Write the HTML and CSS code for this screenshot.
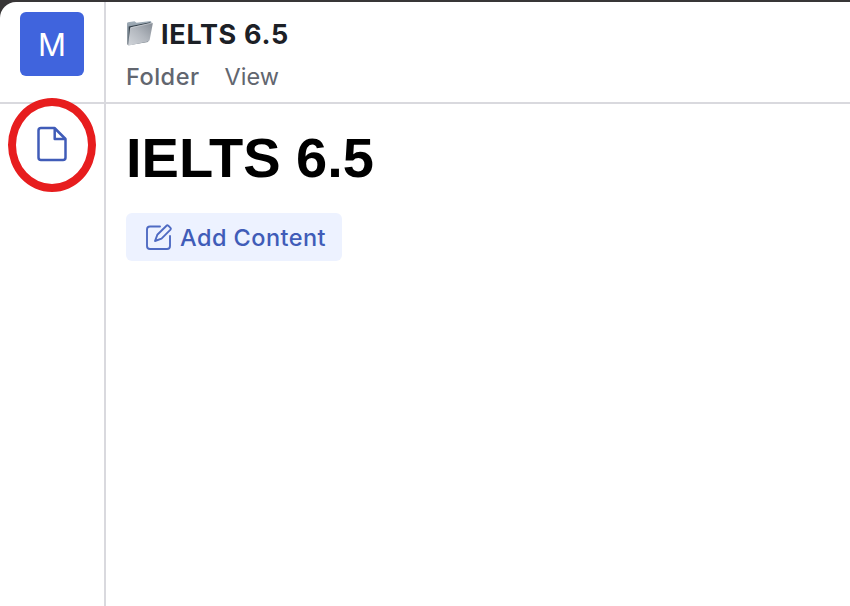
FILE: index.html
```
<!DOCTYPE html>
<html lang="en">
<head>
<meta charset="utf-8">
<title>IELTS 6.5</title>
<link rel="stylesheet" href="styles.css">
</head>
<body>
<div class="window">
  <aside class="sidebar">
    <div class="workspace"><div class="avatar">M</div></div>
    <button class="page-button" aria-label="Page">
      <svg width="32" height="36" viewBox="0 0 32 36" fill="none" stroke="#405cb8" stroke-width="2.5" stroke-linejoin="round"><path d="M5 2h13.500L29.500 13V31.500a2.500 2.500 0 0 1-2.500 2.500H5A2.500 2.500 0 0 1 2.500 31.500V4.500A2.500 2.500 0 0 1 5 2Z"/><path d="M18.700 2V13H29.500"/></svg>
      <span class="ring"></span>
    </button>
  </aside>
  <main class="main">
    <header class="header">
      <div class="title-row">
        <svg class="folder" width="28" height="28" viewBox="0 0 28 28">
          <defs>
            <linearGradient id="front" x1="0" y1="1" x2="1" y2="0"><stop offset="0" stop-color="#d2d6db"/><stop offset=".5" stop-color="#b2b7be"/><stop offset="1" stop-color="#858c95"/></linearGradient>
            <linearGradient id="back" x1="0" y1="0" x2="0" y2="1"><stop offset="0" stop-color="#a3b0bb"/><stop offset="1" stop-color="#596570"/></linearGradient>
          </defs>
          <path fill="url(#back)" d="M1 4.500Q1 3.500 2 3.300L8.500 2.300 10.500 3.800 24.500 2Q25.500 2 25.300 4L22 23 2.500 26.300Q1.300 26 1.300 25Z"/>
          <path fill="#34404a" d="M2.700 7.500 24.300 3.200V6L3 23Z"/>
          <path fill="url(#front)" d="M5 8.200 25.500 3.700Q27 3.500 26.700 5L23.700 20.700Q23.500 22.100 22.200 22.400L3.200 26.600Q2 26.800 2.200 25.500L4 9.500Q4.100 8.500 5 8.200Z"/>
          <path fill="none" stroke="#d8dce0" stroke-width=".6" d="M4.500 8.800 26 4"/>
        </svg>
        <span class="title">IELTS 6.5</span>
      </div>
      <nav class="menu"><span class="menu-folder">Folder</span><span class="menu-view">View</span></nav>
    </header>
    <section class="content">
      <h1>IELTS 6.5</h1>
      <button class="add">
        <svg width="28" height="28" viewBox="0 0 28 28" fill="none" stroke="#4f6bc3" stroke-width="1.900" stroke-linecap="round" stroke-linejoin="round"><path d="M15 3.500H5a3 3 0 0 0-3 3v16.500a3 3 0 0 0 3 3h17a3 3 0 0 0 3-3V13"/><path d="M10 18 12.300 11.800 21.500 2.700Q22.300 1.900 23.300 2.700L25.500 4.900Q26.300 5.800 25.500 6.700L16.500 15.700Z"/></svg>
        <span class="add-label">Add Content</span>
      </button>
    </section>
  </main>
</div>
</body>
</html>
```
FILE: styles.css
```
* { box-sizing: border-box; }
body { margin: 0; padding-top: 2px; height: 606px; background: #383637; font-family: Inter, sans-serif; overflow: hidden; }
.window { display: flex; height: 604px; background: #fff; border-top-left-radius: 16px; overflow: hidden; }
.sidebar { width: 106px; border-right: 2px solid #d9d9de; }
.workspace { height: 102px; padding: 10px 20px; border-bottom: 2px solid #d9d9de; }
.avatar { width: 64px; height: 64px; border-radius: 6px; background: #4064dd; color: #fff; font-size: 31px; line-height: 66px; text-align: center; }
.page-button { position: relative; display: flex; align-items: center; justify-content: center; width: 104px; height: 80px; padding: 0; border: 0; background: none; }
.ring { position: absolute; left: 8px; top: -6px; width: 88px; height: 94px; border: 8px solid #e71d1e; border-radius: 50%; }
.main { flex: 1; }
.header { height: 102px; padding: 16px 20px 0; border-bottom: 2px solid #d9d9de; }
.title-row { display: flex; align-items: center; height: 32px; gap: 7px; }
.folder { flex: none; margin-top: -2px; }
.title { padding-top: 2px; font-size: 27px; font-weight: 700; line-height: 32px; letter-spacing: .7px; color: #1c2026; white-space: nowrap; }
.menu { display: flex; gap: 25px; margin-top: 12px; font-size: 23.500px; line-height: 30px; color: #62666f; }
.menu-folder { font-weight: 500; letter-spacing: .5px; }
.menu-view { letter-spacing: 0; }
.content { padding: 21px 20px; }
h1 { margin: 0; font: bold 56px/66px "Liberation Sans", sans-serif; color: #000; white-space: nowrap; }
.add { display: flex; align-items: center; gap: 7px; width: 216px; height: 48px; margin-top: 22px; padding: 0 0 0 19px; border: 0; border-radius: 6px; background: #edf2ff; color: #405cb8; font: 500 23.500px/30px Inter, sans-serif; }
.add-label { padding-top: 2px; letter-spacing: .45px; white-space: nowrap; }
```
